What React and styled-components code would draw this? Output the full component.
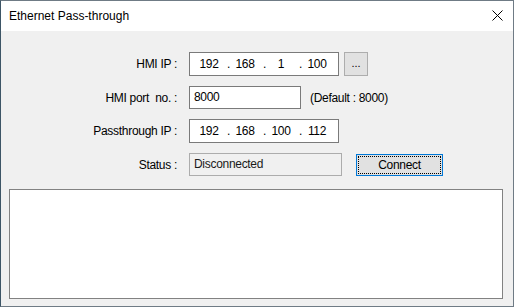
import React from 'react'
import styled, { createGlobalStyle } from 'styled-components'

const GlobalStyle = createGlobalStyle`
    html, body {
        margin: 0;
        padding: 0;
        background: #ffffff;
    }
    body {
        font-family: "Segoe UI", "Liberation Sans", Arial, sans-serif;
        font-size: 12px;
        color: #000;
    }
`

const Window = styled.div`
    width: 514px;
    height: 307px;
    box-sizing: border-box;
    border: 1px solid #6f7b85;
    border-left-color: #3d5566;
    display: flex;
    flex-direction: column;
    background: #f0f0f0;
`

const TitleBar = styled.div`
    height: 30px;
    flex: none;
    background: #ffffff;
    display: flex;
    align-items: center;
    justify-content: space-between;
    padding: 0 10px 0 8px;
`

const Title = styled.span`
    font-size: 12px;
    padding-bottom: 1px;
`

const CloseIcon = styled.svg`
    width: 11px;
    height: 11px;
    margin-top: -1px;
`

const Body = styled.div`
    flex: 1;
    padding: 21px 10px 7px 8px;
    display: flex;
    flex-direction: column;
    letter-spacing: -0.3px;
`

const Form = styled.div`
    display: grid;
    grid-template-columns: 168px 1fr;
    grid-template-rows: 24px 23px 24px 23px;
    column-gap: 12px;
    row-gap: 10px;
`

const Label = styled.div`
    text-align: right;
    align-self: center;
    white-space: pre;
`

const FieldRow = styled.div`
    display: flex;
    align-items: stretch;
    gap: ${({gap}) => gap || 5}px;
`

const Box = styled.div`
    box-sizing: border-box;
    width: ${({w}) => w}px;
    border: 1px solid ${({disabled}) => disabled ? '#acacac' : '#7a7a7a'};
    background: ${({disabled}) => disabled ? '#f0f0f0' : '#ffffff'};
    display: flex;
    align-items: center;
    padding: 0 0 1px 4px;
    color: ${({disabled}) => disabled ? '#1a1a1a' : '#000'};
`

const IpBox = styled(Box)`
    padding-left: 1px;
`

const Octet = styled.span`
    position: relative;
    width: 36px;
    text-align: center;

    &:not(:first-child)::before {
        content: ".";
        position: absolute;
        left: 0;
    }
`

const SmallButton = styled.div`
    box-sizing: border-box;
    width: 24px;
    background: #e1e1e1;
    border: 1px solid #adadad;
    display: flex;
    align-items: center;
    justify-content: center;
    font-size: 11px;
    letter-spacing: 0;
    padding-bottom: 2px;
`

const Hint = styled.span`
    align-self: center;
`

const Button = styled.div`
    box-sizing: border-box;
    width: 87px;
    margin-top: 1px;
    background: #e1e1e1;
    border: 1px solid #0078d7;
    padding: 1px;
    display: flex;

    span {
        flex: 1;
        border: 1px dotted #000;
        display: flex;
        align-items: center;
        justify-content: center;
        padding-bottom: 1px;
    }
`

const LogBox = styled.div`
    margin-top: 13px;
    flex: 1;
    background: #ffffff;
    border: 1px solid #828282;
`

function IpField({value}) {
    return (
        <IpBox w={150}>
            {value.split('.').map((part, i) => <Octet key={i}>{part}</Octet>)}
        </IpBox>
    )
}

export default function App() {
    return (
        <>
            <GlobalStyle />
            <Window>
                <TitleBar>
                    <Title>Ethernet Pass-through</Title>
                    <CloseIcon viewBox="0 0 11 11">
                        <path d="M0.5 0.5 L10.5 10.5 M10.5 0.5 L0.5 10.5" stroke="#000" strokeWidth="1" fill="none" />
                    </CloseIcon>
                </TitleBar>
                <Body>
                    <Form>
                        <Label>{'HMI IP :'}</Label>
                        <FieldRow>
                            <IpField value="192.168.1.100" />
                            <SmallButton>...</SmallButton>
                        </FieldRow>

                        <Label>{'HMI port  no. :'}</Label>
                        <FieldRow gap={9}>
                            <Box w={112}>8000</Box>
                            <Hint>(Default : 8000)</Hint>
                        </FieldRow>

                        <Label>{'Passthrough IP :'}</Label>
                        <FieldRow>
                            <IpField value="192.168.100.112" />
                        </FieldRow>

                        <Label>{'Status :'}</Label>
                        <FieldRow gap={14}>
                            <Box w={153} disabled>Disconnected</Box>
                            <Button><span>Connect</span></Button>
                        </FieldRow>
                    </Form>
                    <LogBox />
                </Body>
            </Window>
        </>
    )
}
